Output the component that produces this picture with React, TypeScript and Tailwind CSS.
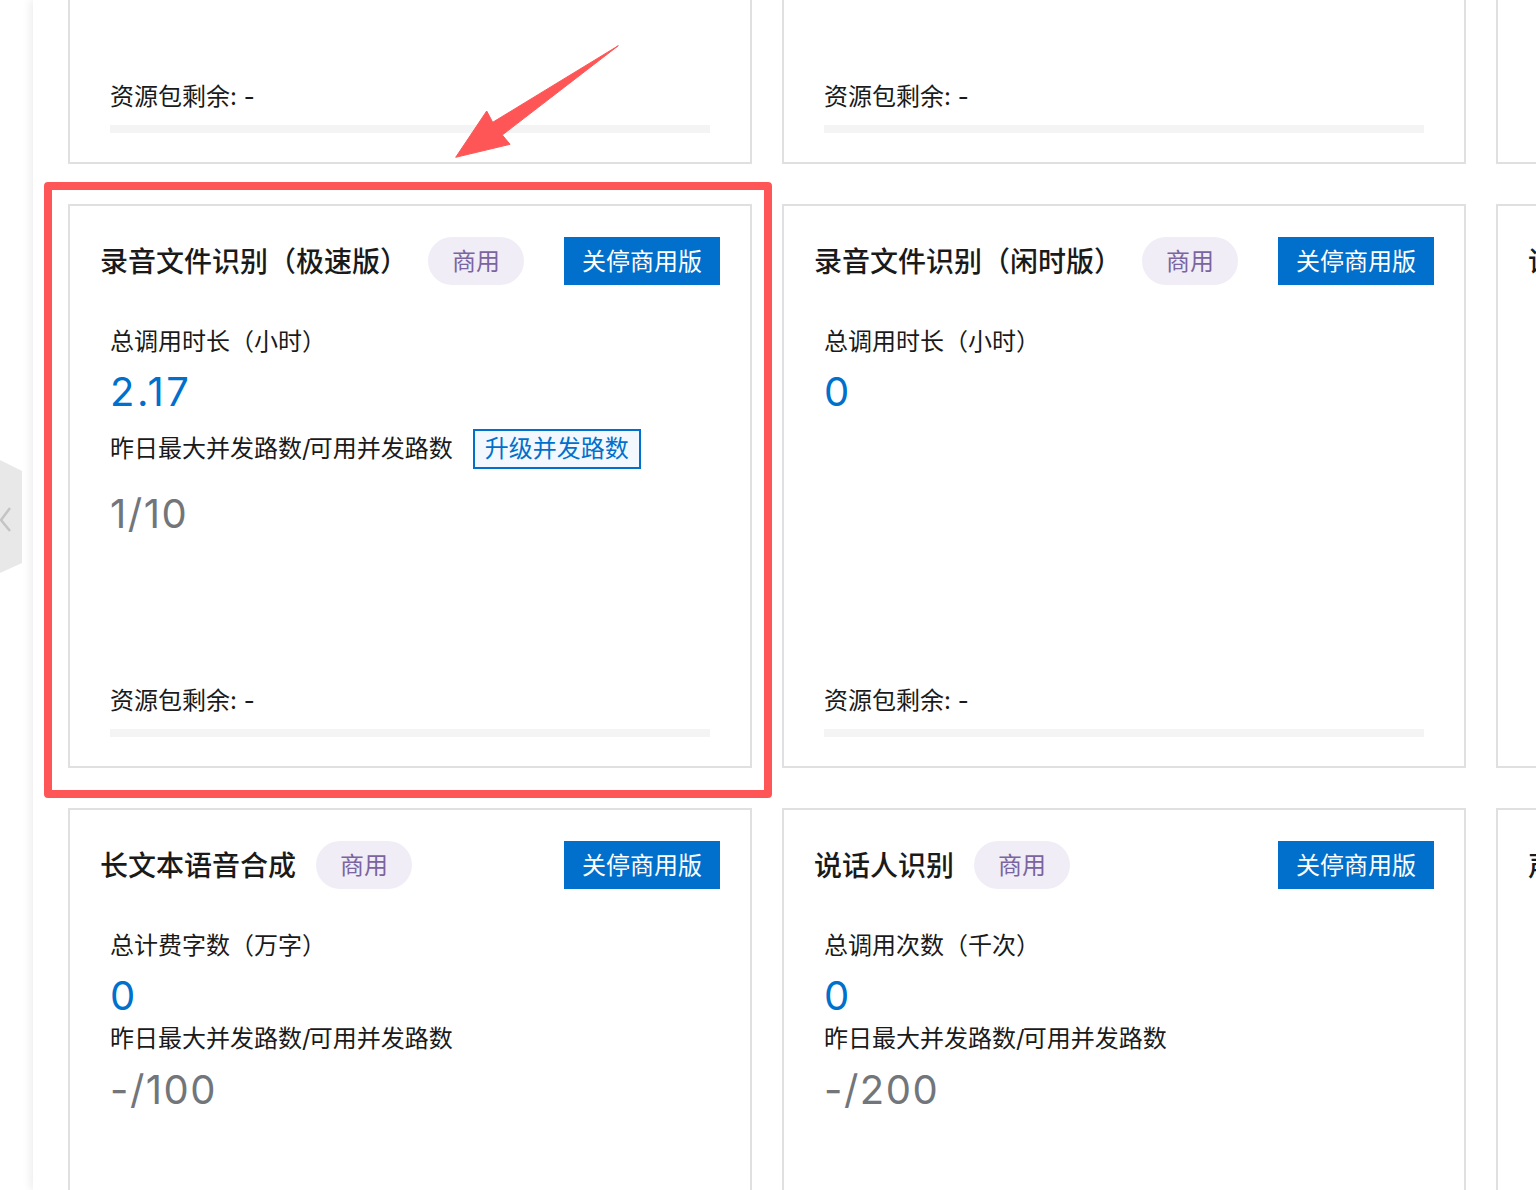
import * as React from "react";

interface CardData {
  title: string;
  metricLabel: string;
  metric: string;
  // no concurrency row at all when undefined
  concurrency?: string;
  canUpgrade?: boolean;
  hasFooter?: boolean;
}

const CARDS: CardData[] = [
  {
    title: "录音文件识别（极速版）",
    metricLabel: "总调用时长（小时）",
    metric: "2.17",
    concurrency: "1/10",
    canUpgrade: true,
    hasFooter: true,
  },
  { title: "录音文件识别（闲时版）", metricLabel: "总调用时长（小时）", metric: "0", hasFooter: true },
];

const BOTTOM_CARDS: CardData[] = [
  { title: "长文本语音合成", metricLabel: "总计费字数（万字）", metric: "0", concurrency: "-/100" },
  { title: "说话人识别", metricLabel: "总调用次数（千次）", metric: "0", concurrency: "-/200" },
];

function Footer() {
  return (
    <>
      <p className="text-2xl leading-[34px] text-[#1a1a1a]">资源包剩余: -</p>
      <div className="mt-[11px] h-2 w-[600px] bg-[#f4f4f4]" />
    </>
  );
}

// top row, only the bottom of these cards is on the page
function TailCard({ empty }: { empty?: boolean }) {
  return (
    <div className="flex flex-col justify-end border-2 border-t-0 border-[#e0e0e0] bg-white pb-[29px] pl-10">
      {!empty && <Footer />}
    </div>
  );
}

// rightmost column, cut by the page edge
function EdgeCard({ title }: { title: string }) {
  return (
    <div className="border-2 border-[#e0e0e0] bg-white pt-[31px] pl-[30px]">
      <h3 className="h-12 pt-px text-[28px] leading-[48px] font-medium whitespace-nowrap text-[#1a1a1a]">{title}</h3>
    </div>
  );
}

function ServiceCard({ title, metricLabel, metric, concurrency, canUpgrade, hasFooter }: CardData) {
  return (
    <div className="flex flex-col border-2 border-[#e0e0e0] bg-white pt-[31px] pr-[30px] pb-[29px] pl-[30px]">
      <div className="flex h-12 items-center">
        <h3 className="h-12 pt-px text-[28px] leading-[48px] font-medium whitespace-nowrap text-[#1a1a1a]">{title}</h3>
        <span className="ml-5 flex h-12 w-24 items-center justify-center rounded-3xl bg-[#f0edf7] pt-0.5 text-2xl text-[#7b64a0]">
          商用
        </span>
        <button className="ml-auto h-12 w-[156px] bg-[#0070cc] pt-0.5 text-2xl text-white">关停商用版</button>
      </div>

      <div className="flex flex-1 flex-col pt-10 pr-[10px] pl-[10px]">
        <p className="text-2xl leading-[34px] text-[#1a1a1a]">{metricLabel}</p>
        <p className="mt-2 mb-px text-[40px] leading-[50px] tracking-[2.5px] text-[#0070cc]">{metric}</p>
        {concurrency && (
          <>
            <div className="flex items-center">
              <span className="text-2xl leading-[34px] text-[#1a1a1a]">
                昨日最大并发路数<span className="tracking-[-2px]">/</span>可用并发路数
              </span>
              {canUpgrade && (
                <button className="my-[11px] ml-5 h-10 w-[168px] border-2 border-[#0070cc] bg-[#f2f8fd] text-2xl text-[#0070cc]">
                  升级并发路数
                </button>
              )}
            </div>
            <p className="mt-[9px] text-[40px] leading-[50px] tracking-[1.5px] text-[#72767b]">{concurrency}</p>
          </>
        )}
        {hasFooter && (
          <div className="mt-auto">
            <Footer />
          </div>
        )}
      </div>
    </div>
  );
}

export default function App() {
  return (
    <div
      className="relative flex h-[1190px] w-[1536px] overflow-hidden bg-white"
      style={{ fontFamily: '"Inter", "Noto Sans CJK SC", sans-serif' }}
    >
      <div className="w-[33px] shrink-0" />
      <main className="flex-1 bg-white pl-[35px] shadow-[-3px_0_8px_rgba(0,0,0,0.07)]">
        <div className="grid grid-cols-[repeat(3,684px)] grid-rows-[164px_564px_564px] gap-x-[30px] gap-y-10">
          <TailCard />
          <TailCard />
          <TailCard empty />
          {CARDS.map((card) => (
            <ServiceCard key={card.title} {...card} />
          ))}
          <EdgeCard title="语音合成" />
          {BOTTOM_CARDS.map((card) => (
            <ServiceCard key={card.title} {...card} />
          ))}
          <EdgeCard title="声音复刻" />
        </div>
      </main>

      {/* collapse handle */}
      <svg className="absolute top-[460px] left-0" width="22" height="114" viewBox="0 0 22 114">
        <path d="M0 0L22 11V103L0 113Z" fill="#e8e8e8" />
        <path d="M10 48L1 60L10 71" fill="none" stroke="#c4c4c4" strokeWidth="2.5" />
      </svg>

      {/* annotation drawn over the screenshot */}
      <div className="absolute top-[182px] left-[44px] h-[616px] w-[728px] rounded border-8 border-[#fe5656]" />
      <svg className="absolute top-0 left-0" width="700" height="170" viewBox="0 0 700 170">
        <path d="M618.3 45.7L492.7 122.3L486.7 111L455.7 157.3L510 144.3L502.3 135Z" fill="#fe5656" stroke="#fe5656" strokeWidth="1" strokeLinejoin="round" />
      </svg>
    </div>
  );
}
